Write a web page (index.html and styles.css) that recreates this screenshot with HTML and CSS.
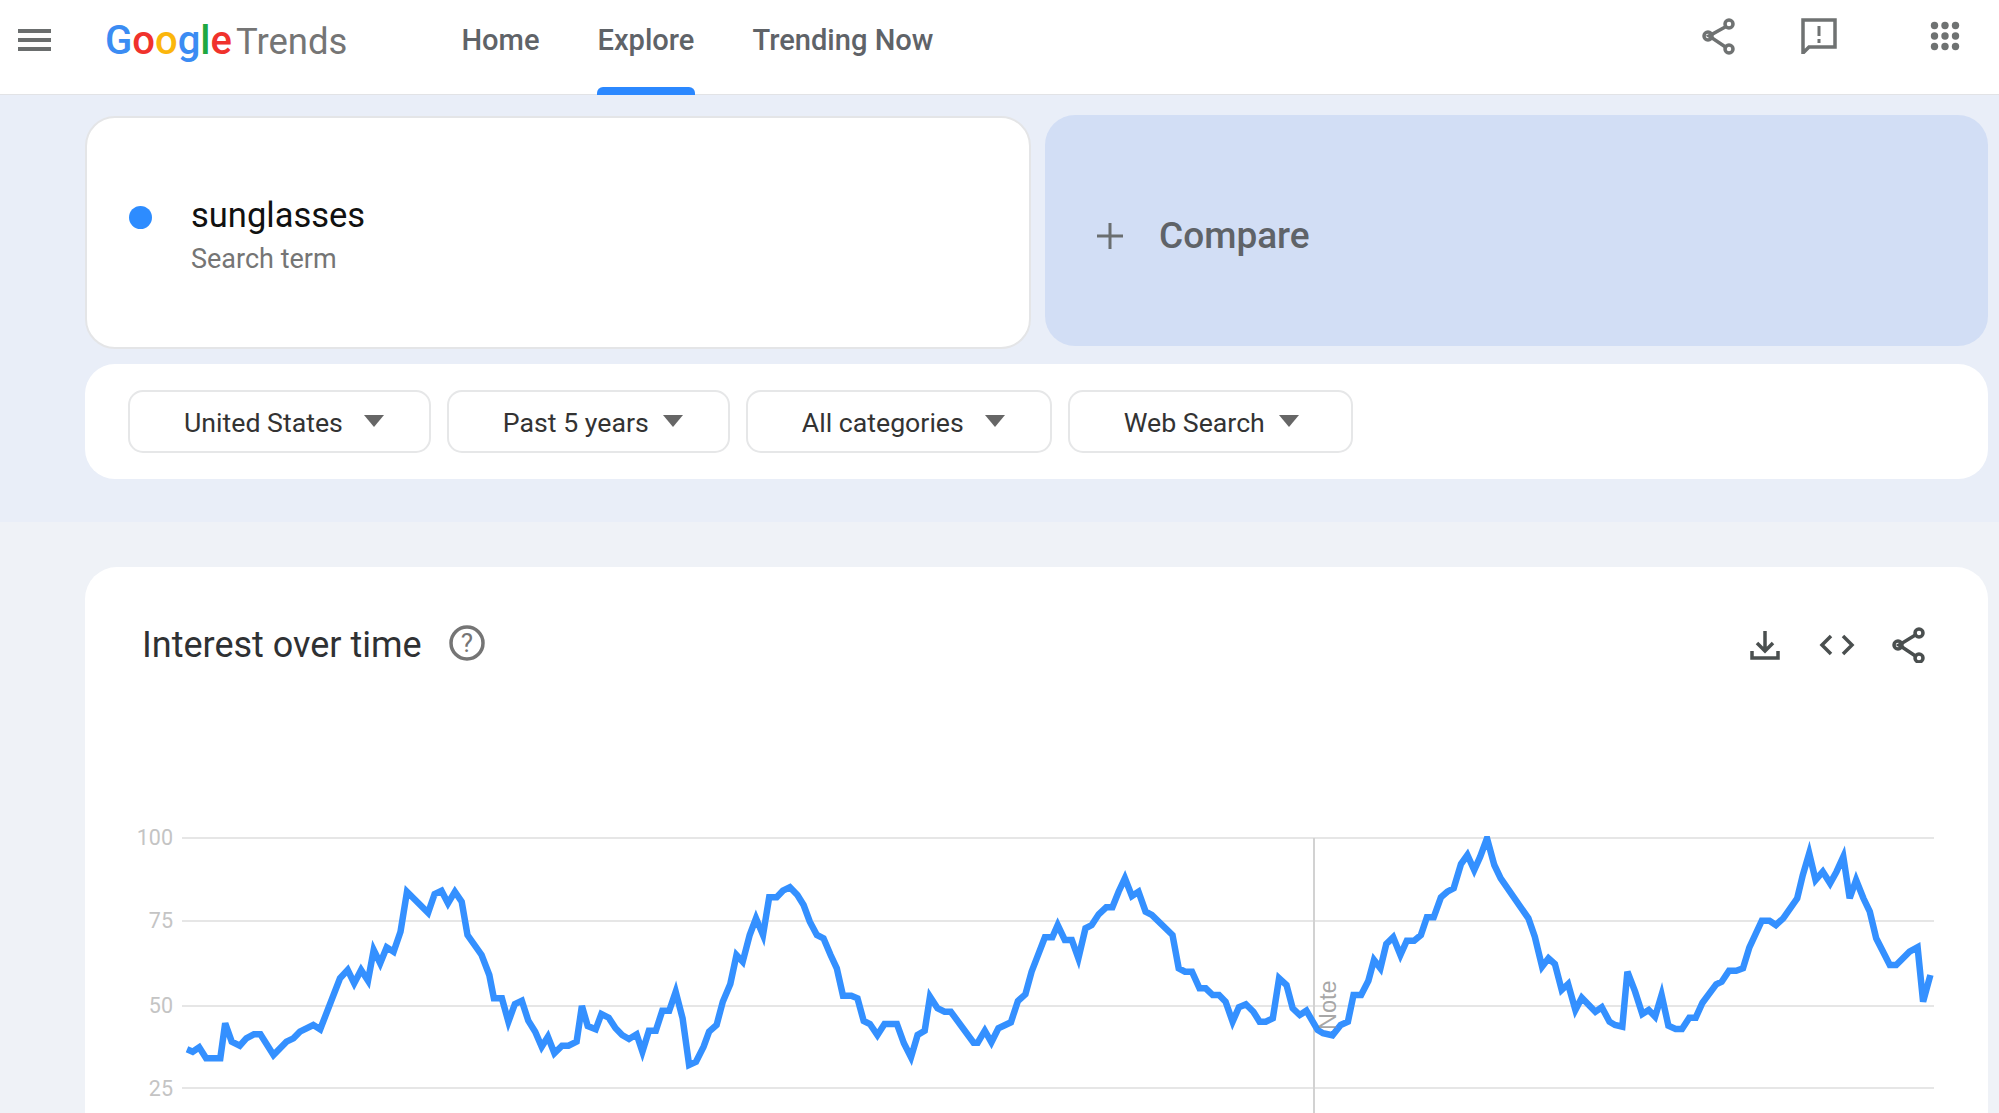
FILE: index.html
```html
<!DOCTYPE html>
<html lang="en">
<head>
<meta charset="UTF-8">
<meta name="viewport" content="width=device-width, initial-scale=1.0">
<title>Google Trends</title>
<link rel="stylesheet" href="styles.css">
</head>
<body>
<header class="top-bar">
    <button class="menu-button" aria-label="Menu">
        <span></span><span></span><span></span>
    </button>
    <div class="logo">
        <span class="logo-google"><span class="c-blue">G</span><span class="c-red">o</span><span class="c-yellow">o</span><span class="c-blue">g</span><span class="c-green">l</span><span class="c-red">e</span></span>
        <span class="logo-trends">Trends</span>
    </div>
    <nav class="main-nav">
        <a>Home</a>
        <a class="active">Explore</a>
        <a>Trending Now</a>
    </nav>
    <div class="top-actions">
        <svg class="icon-share-top" viewBox="0 0 36 38">
            <path d="M27 9 L9 19 L27 31"/>
            <circle cx="29" cy="7" r="4"/>
            <circle cx="8" cy="19" r="4"/>
            <circle cx="29" cy="32" r="4"/>
        </svg>
        <svg class="icon-feedback" viewBox="0 0 36 36">
            <path class="outline" d="M2 2 H34 V29 H8 L2 35 Z"/>
            <path class="mark" d="M18 8 V18 M18 21 V25"/>
        </svg>
        <svg class="icon-grid" viewBox="0 0 30 30">
            <circle cx="4.5" cy="4.5" r="3.7"/><circle cx="15" cy="4.5" r="3.7"/><circle cx="25.5" cy="4.5" r="3.7"/>
            <circle cx="4.5" cy="15" r="3.7"/><circle cx="15" cy="15" r="3.7"/><circle cx="25.5" cy="15" r="3.7"/>
            <circle cx="4.5" cy="25.5" r="3.7"/><circle cx="15" cy="25.5" r="3.7"/><circle cx="25.5" cy="25.5" r="3.7"/>
        </svg>
    </div>
</header>

<section class="query-panel">
    <div class="term-row">
        <div class="term-card">
            <span class="term-dot"></span>
            <div class="term-text">
                <div class="term-name">sunglasses</div>
                <div class="term-type">Search term</div>
            </div>
        </div>
        <div class="compare-card">
            <svg class="icon-plus" viewBox="0 0 28 28"><path d="M14 1 V27 M1 14 H27"/></svg>
            <span>Compare</span>
        </div>
    </div>
    <div class="filter-card">
        <div class="filter-chip">United States<span class="caret"></span></div>
        <div class="filter-chip">Past 5 years<span class="caret caret-near"></span></div>
        <div class="filter-chip">All categories<span class="caret"></span></div>
        <div class="filter-chip">Web Search<span class="caret caret-near"></span></div>
    </div>
</section>

<section class="results-panel">
    <div class="chart-card">
        <div class="chart-header">
            <h2>Interest over time</h2>
            <svg class="icon-help" viewBox="0 0 36 36">
                <circle cx="18" cy="18" r="16"/>
                <text x="18" y="27">?</text>
            </svg>
            <div class="chart-actions">
                <svg class="icon-download" viewBox="0 0 30 30">
                    <path d="M15 1 V20 M7 13 L15 21 L23 13"/>
                    <path d="M2 21 V28 H28 V21"/>
                </svg>
                <svg class="icon-code" viewBox="0 0 36 22">
                    <path d="M12 2 L3 11 L12 20 M24 2 L33 11 L24 20"/>
                </svg>
                <svg class="icon-share" viewBox="0 0 34 36">
                    <path d="M25 7 L7 18 L25 30"/>
                    <circle cx="27" cy="6" r="4"/>
                    <circle cx="6" cy="18" r="4"/>
                    <circle cx="27" cy="31" r="4"/>
                </svg>
            </div>
        </div>
        <svg class="trend-chart" viewBox="85 820 1903 293">
            <clipPath id="plot-area"><rect x="182" y="836" width="1752" height="277"/></clipPath>
            <path class="grid-line" d="M182 838 H1934 M182 921 H1934 M182 1006 H1934 M182 1088 H1934"/>
            <text class="axis-label" x="173" y="845">100</text>
            <text class="axis-label" x="173" y="928">75</text>
            <text class="axis-label" x="173" y="1013">50</text>
            <text class="axis-label" x="173" y="1096">25</text>
            <path class="note-line" d="M1314 838 V1113"/>
            <polyline class="trend-line" clip-path="url(#plot-area)" points="187,1049.3 192.7,1051.7 199.2,1047.3 206.1,1058.3 220.3,1058.3 225.2,1023.3 231.7,1041.7 239.8,1045.7 246.3,1038.3 253.9,1034.3 260.4,1034.3 273.5,1055 286.5,1041.7 293.4,1038.3 299.9,1031.7 313.3,1025 320.2,1029.3 340,978.3 347.7,970 354.2,983.3 361.1,970 368,980.7 373.7,950 380.2,963.3 386.7,947.3 393.6,951.7 400.5,931.7 407,891.7 428.1,912.7 434.6,894 441.5,890.7 448,903.3 454.9,891.7 461.7,901.7 467.5,935 481.6,955 489.3,975 493.9,998.3 501.9,998.3 508.4,1021.7 514.9,1004 521.8,1000.7 528.3,1020.7 535.2,1031.7 541.7,1046.7 547.9,1036.7 554.4,1053.3 562,1045.7 568.5,1045.7 576.6,1041.7 581.9,1006 587.7,1026 595.7,1029.3 601.4,1014 608.7,1017.7 615.6,1028.3 622.1,1035 629,1039 636.6,1034.3 642.4,1051.7 648.9,1030.7 655.8,1030.7 662.3,1010.7 669.2,1010.7 675.7,991.7 682.6,1018.3 689.1,1065 696,1061.7 703.6,1046.7 709.1,1031.7 716.6,1025 722.8,1001.7 730.3,984 736.5,955 742.7,961.7 749.7,935 756,918.3 763,935 769.2,897.3 776.7,897.3 782.9,890.7 789.9,887.3 797.4,895 803.6,905 809.8,921.7 816.9,935 823.5,938.3 830.6,955 836.8,968.3 843,995.7 851.3,995.7 857.5,998.3 863.7,1021 869.9,1024 877.4,1035 884.5,1024 896.9,1024 903.9,1043.3 911,1057.3 917.6,1035 924.7,1030.7 930,996.7 937.5,1008.3 944.6,1011.7 950.8,1011.7 973.6,1042.7 977.7,1042.7 984.8,1030.7 991.4,1042.3 998.4,1028.3 1010.9,1022.3 1017.9,1001 1025.4,994.3 1031.6,971.7 1044.9,937.3 1052.3,937.3 1057.7,925 1064.8,940 1071.8,940 1078.4,958.3 1085.5,928.3 1091.7,925 1098.7,914.3 1106.2,907.3 1112.4,907.3 1118.6,891.7 1124.9,878.3 1131.9,896 1138.5,891.7 1145.6,911.7 1151.8,915 1172.5,935 1178.7,968.3 1185,971.7 1192,971.7 1199.5,988.3 1205.7,988.3 1212.7,995 1219,995 1225.6,1001.7 1232.6,1021.7 1238.9,1007.3 1245.9,1004.3 1253.4,1011.7 1259.6,1021.7 1265.8,1021.7 1272.8,1018.3 1279.1,978.3 1286.5,985 1292.7,1008.3 1299.8,1015 1306.4,1010.7 1317.6,1030 1323,1033.3 1332.5,1035.3 1340.7,1025 1347.9,1021.7 1353.5,995 1361.1,995 1368.4,980.7 1374,960 1380.4,968.3 1386.3,944 1393.2,937.3 1400.4,955 1406.8,940.7 1414.1,940.7 1420.9,935 1426.9,917.3 1433.7,917.3 1440.9,897.3 1447.3,891.7 1453.7,888.3 1461,864 1467.4,855 1474.2,870 1480.2,856.7 1487,838.3 1494.3,865 1500.7,878.3 1528.4,918.3 1534.8,936.7 1542.1,966.7 1548.5,958.3 1554.9,964 1561.7,990 1568.1,984 1575.4,1010 1581.8,997.7 1595.4,1011.7 1601.8,1007.3 1609.5,1021.7 1615,1025 1622.3,1026.7 1627.4,971.7 1635.1,991.7 1642.3,1014 1648.7,1010 1655.1,1016.7 1661.6,995 1668.4,1025.7 1675.6,1029 1682,1029 1689.3,1017.7 1695.7,1017.7 1702.5,1002.7 1716.2,984.3 1721.7,981.7 1729,970.7 1736.2,970.7 1743,968.3 1749.4,947.3 1761.8,920.7 1769.5,920.7 1775.9,925 1783.2,918.3 1797.2,898.3 1802.8,875 1809.2,853.3 1815.6,880 1822.8,871.7 1830.1,883.3 1836.5,871.7 1843.3,856.7 1849.7,898.3 1856.1,880 1863.4,898.3 1869.8,911.7 1876.2,938.3 1889.8,965 1896.2,965 1909.5,951.7 1917.6,947.3 1923.1,1001.7 1930.4,975"/>
            <text class="note-label" transform="translate(1336 1030) rotate(-90)">Note</text>
        </svg>
    </div>
</section>
</body>
</html>
```

FILE: styles.css
```css
html, body {
    height: 100%;
    margin: 0;
    overflow: hidden;
}
body {
    display: flex;
    flex-direction: column;
    font-family: Roboto, "Noto Sans", sans-serif;
    background-color: #eff2f7;
}
svg {
    display: block;
    flex: none;
}

/* top bar */
.top-bar {
    position: relative;
    display: flex;
    align-items: center;
    flex: none;
    box-sizing: border-box;
    height: 95px;
    padding: 0 39px 14px 18px;
    background-color: white;
    border-bottom: 1px solid #e2e3e6;
}
.menu-button {
    display: flex;
    flex-direction: column;
    justify-content: space-between;
    width: 33px;
    height: 22px;
    padding: 0;
    border: none;
    background: none;
}
.menu-button span {
    display: block;
    height: 4px;
    background-color: #6b6e6e;
}
.logo {
    display: flex;
    align-items: baseline;
    gap: 4px;
    margin-left: 54px;
}
.logo-google {
    font-size: 40px;
    font-weight: 500;
}
.logo-trends {
    font-size: 36.5px;
    color: #757575;
}
.c-blue { color: #3b8cf3; }
.c-red { color: #f0322c; }
.c-yellow { color: #fbb60c; }
.c-green { color: #1fa840; }
.main-nav {
    display: flex;
    gap: 58px;
    margin-left: 114px;
    font-size: 29.1px;
    font-weight: 500;
    color: #5f6368;
}
.main-nav a.active::after {
    content: "";
    position: absolute;
    left: 597px;
    bottom: -1px;
    width: 98px;
    height: 8px;
    border-radius: 6px 6px 0 0;
    background-color: #2b88ff;
}
.top-actions {
    display: flex;
    align-items: center;
    margin-left: auto;
    margin-bottom: 8px;
}
.top-actions svg {
    fill: none;
    stroke: #6f7272;
}
.icon-share-top {
    width: 36px;
    height: 38px;
    stroke-width: 3.5;
}
.icon-feedback {
    width: 36px;
    height: 36px;
    margin-left: 65px;
    stroke-width: 3.5;
}
.icon-feedback .mark {
    stroke-width: 3;
}
.top-actions .icon-grid {
    width: 30px;
    height: 30px;
    margin-left: 93px;
    fill: #6f7272;
    stroke: none;
}

/* search term and filters */
.query-panel {
    flex: none;
    box-sizing: border-box;
    height: 427px;
    padding: 20px 11px 0 85px;
    background-color: #e9eef8;
}
.term-row {
    display: grid;
    grid-template-columns: 946px 943px;
    gap: 14px;
    height: 234px;
}
.term-card {
    display: flex;
    align-items: center;
    box-sizing: border-box;
    margin-top: 1px;
    padding: 4px 0 0 42px;
    border: 2px solid #e4e5e7;
    border-radius: 30px;
    background-color: white;
}
.term-dot {
    flex: none;
    width: 23px;
    height: 23px;
    margin-bottom: 34px;
    border-radius: 50%;
    background-color: #2d8cff;
}
.term-text {
    margin-left: 39px;
}
.term-name {
    font-size: 34.5px;
    color: #111;
}
.term-type {
    margin-top: 8px;
    font-size: 27px;
    color: #757575;
}
.compare-card {
    display: flex;
    align-items: center;
    box-sizing: border-box;
    height: 231px;
    padding: 10px 0 0 51px;
    border-radius: 30px;
    background-color: #d2def5;
    font-size: 37px;
    font-weight: 500;
    color: #5f6368;
}
.icon-plus {
    width: 28px;
    height: 28px;
    margin-right: 35px;
    fill: none;
    stroke: #6a6e70;
    stroke-width: 3;
}
.filter-card {
    display: flex;
    align-items: center;
    gap: 16px;
    box-sizing: border-box;
    height: 115px;
    margin-top: 15px;
    padding-left: 43px;
    border-radius: 30px;
    background-color: white;
}
.filter-chip {
    display: flex;
    align-items: center;
    box-sizing: border-box;
    height: 63px;
    padding: 3px 45px 0 54px;
    border: 2px solid #e6e7e8;
    border-radius: 15px;
    font-size: 26.7px;
    color: #333;
}
.filter-chip:last-child {
    padding-right: 52px;
}
.caret {
    width: 0;
    height: 0;
    margin-left: 21px;
    margin-bottom: 5px;
    border-left: 10px solid transparent;
    border-right: 10px solid transparent;
    border-top: 12px solid #666;
}
.caret-near {
    margin-left: 14px;
}

/* chart */
.results-panel {
    flex: 1;
    min-height: 0;
    padding: 45px 11px 0 85px;
}
.chart-card {
    height: 100%;
    overflow: hidden;
    border-radius: 32px 32px 0 0;
    background-color: white;
}
.chart-header {
    display: flex;
    align-items: center;
    height: 44px;
    padding: 56px 62px 0 57px;
}
.chart-header h2 {
    margin: 0;
    font-size: 36px;
    font-weight: 400;
    color: #2f3133;
}
.icon-help {
    width: 36px;
    height: 36px;
    margin: 0 0 5px 27px;
    fill: none;
    stroke: #757575;
    stroke-width: 3.5;
}
.icon-help text {
    fill: #757575;
    stroke: none;
    font-size: 26px;
    text-anchor: middle;
}
.chart-actions {
    display: flex;
    align-items: center;
    margin-left: auto;
}
.chart-actions svg {
    fill: none;
    stroke: #4a4f4f;
    stroke-width: 3.5;
}
.icon-download {
    width: 30px;
    height: 30px;
}
.icon-code {
    width: 36px;
    height: 22px;
    margin-left: 39px;
}
.icon-share {
    width: 34px;
    height: 36px;
    margin-left: 37px;
}
.trend-chart {
    width: 1903px;
    height: 293px;
    margin-top: 153px;
}
.grid-line {
    fill: none;
    stroke: #e6e6e6;
    stroke-width: 2;
}
.note-line {
    fill: none;
    stroke: #d2d2d2;
    stroke-width: 2;
}
.trend-line {
    fill: none;
    stroke: #3490ff;
    stroke-width: 6.5;
    stroke-linejoin: miter;
}
.axis-label {
    fill: #c4c4c4;
    font-size: 21.5px;
    text-anchor: end;
}
.note-label {
    fill: #8a8a8a;
    fill-opacity: 0.75;
    font-family: "Liberation Sans", sans-serif;
    font-size: 23.5px;
}
```
